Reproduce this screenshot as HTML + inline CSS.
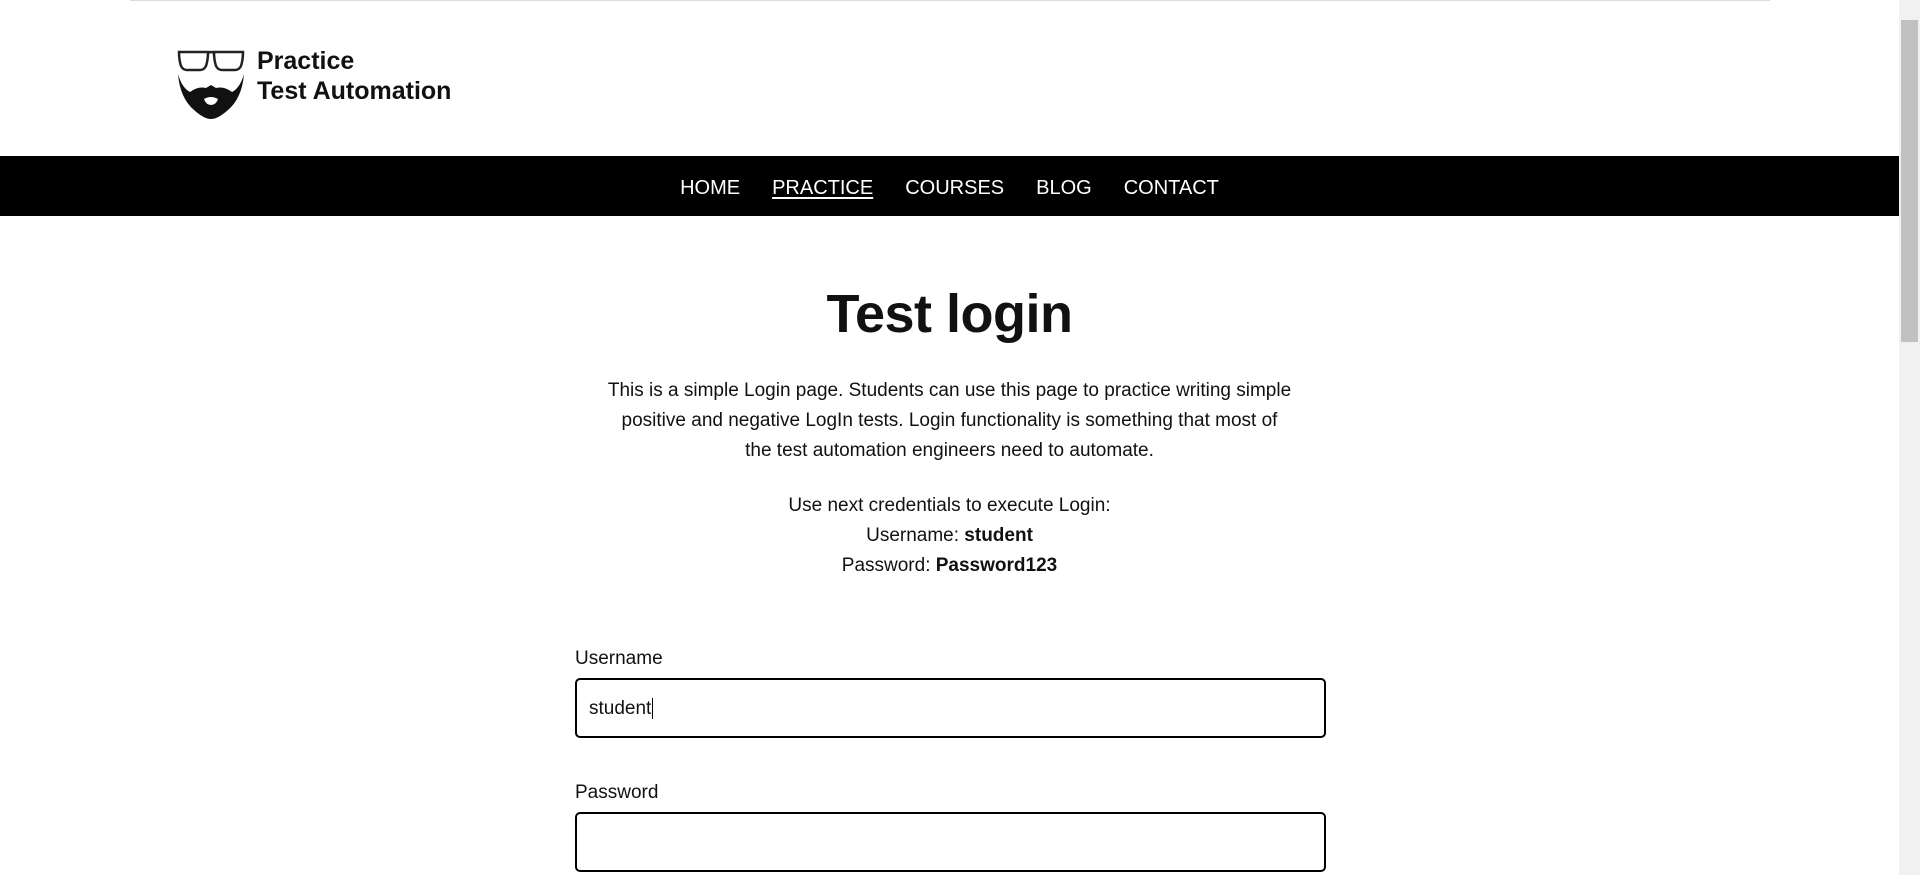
<!DOCTYPE html>
<html><head><meta charset="utf-8"><style>
html,body{margin:0;padding:0;}
body{width:1920px;height:875px;overflow:hidden;background:#fff;font-family:"Liberation Sans",sans-serif;color:#111;position:relative}
.topline{position:absolute;left:130px;width:1640px;top:0;height:1px;background:#ddd}
.logo{position:absolute;left:176px;top:48px}
.ltext{position:absolute;left:257px;top:46px;font-weight:bold;font-size:25px;line-height:30px;color:#111;letter-spacing:0}
nav{position:absolute;left:0;top:156px;width:1899px;height:60px;background:#000;text-align:center}
nav a{color:#fff;text-decoration:none;font-size:20px;line-height:60px;padding-top:2px;margin:0 16px;display:inline-block}
nav a.u{text-decoration:underline;text-underline-offset:3px}
h1{position:absolute;left:0;width:1899px;top:279px;margin:0;text-align:center;font-size:54px;line-height:70px;font-weight:bold;letter-spacing:-0.5px}
.p{position:absolute;left:0;width:1899px;text-align:center;font-size:19px;line-height:30px}
label{position:absolute;left:575px;font-size:19px}
.in{position:absolute;left:575px;width:747px;height:56px;border:2px solid #000;border-radius:5px;font-size:19px;box-sizing:content-box}
.sb{position:absolute;right:0;top:0;width:21px;height:875px;background:#f1f1f1}
.th{position:absolute;right:2px;top:20px;width:17px;height:322px;background:#c1c1c1}
</style></head><body>
<div class="topline"></div>
<svg class="logo" width="70" height="72" viewBox="0 0 70 72">
<path d="M3 4 H32 Q32 12 30 18 Q28 22 24 22 H11 Q7 22 5 18 Q3 12 3 4 Z" fill="none" stroke="#222" stroke-width="2.5"/>
<path d="M38 4 H67 Q67 12 65 18 Q63 22 59 22 H46 Q42 22 40 18 Q38 12 38 4 Z" fill="none" stroke="#222" stroke-width="2.5"/>
<path d="M32 5 Q35 3 38 5" fill="none" stroke="#222" stroke-width="2.5"/>
<path d="M2 26 Q4 50 18 62 Q28 71 35 71 Q42 71 52 62 Q66 50 68 26 Q64 40 56 44 Q48 38 40 40 L35 37 L30 40 Q22 38 14 44 Q6 40 2 26 Z M28 51 Q35 47 42 51 Q40 57 35 57 Q30 57 28 51 Z" fill="#111" fill-rule="evenodd"/>
<rect x="32" y="57" width="6" height="4" fill="#111"/>
</svg>
<div class="ltext">Practice<br>Test Automation</div>
<nav><a>HOME</a><a class="u">PRACTICE</a><a>COURSES</a><a>BLOG</a><a>CONTACT</a></nav>
<h1>Test login</h1>
<div class="p" style="top:376px">This is a simple Login page. Students can use this page to practice writing simple<br>positive and negative LogIn tests. Login functionality is something that most of<br>the test automation engineers need to automate.</div>
<div class="p" style="top:491px">Use next credentials to execute Login:<br>Username: <b>student</b><br>Password: <b>Password123</b></div>
<label style="top:648px">Username</label>
<div class="in" style="top:678px"><span style="position:absolute;left:12px;top:18px">student<span style="border-left:1px solid #000;margin-left:1px"></span></span></div>
<label style="top:782px">Password</label>
<div class="in" style="top:812px"></div>
<div class="sb"><div class="th"></div></div>
</body></html>
